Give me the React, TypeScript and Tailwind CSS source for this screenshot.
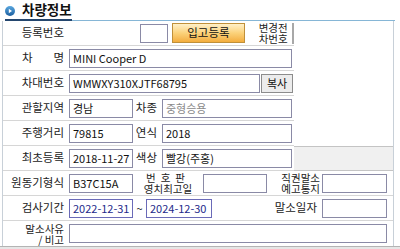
const font = "font-['Noto_Sans_CJK_KR','Noto_Sans',sans-serif]";

function Label({ w, children, className = "" }: { w: string; children: React.ReactNode; className?: string }) {
  return (
    <div className={`flex h-full shrink-0 items-center justify-end pr-[5px] text-[11.5px] text-[#222] ${w} ${className}`}>
      {children}
    </div>
  );
}

function Field({ w, value = "", tone = "normal" }: { w: string; value?: string; tone?: "normal" | "date" | "muted" }) {
  const color =
    tone === "date"
      ? "border-[#6a6ab8] text-[#1e2a8a]"
      : tone === "muted"
        ? "border-[#8a8aa6] text-[#8a8a8a]"
        : "border-[#8a8aa6] text-[#111]";
  return (
    <div className={`flex h-[19px] shrink-0 items-center overflow-hidden whitespace-nowrap border bg-white pl-[3px] text-[11px] ${color} ${w}`}>
      {value}
    </div>
  );
}

function Row({ children, right, last }: { children: React.ReactNode; right?: React.ReactNode; last?: boolean }) {
  return (
    <div className="flex h-[25px]">
      <div className={`flex w-[291px] shrink-0 items-center ${last ? "" : "border-b border-[#d6d6d6]"}`}>{children}</div>
      <div className="flex-1">{right}</div>
    </div>
  );
}

function WideRow({ children, line = true }: { children: React.ReactNode; line?: boolean }) {
  return (
    <div className={`flex h-[25px] items-center ${line ? "border-b border-[#d6d6d6]" : ""}`}>{children}</div>
  );
}

export default function App() {
  return (
    <div className={`h-[249px] w-[400px] overflow-hidden bg-white ${font}`}>
      <div className="flex h-[19px] items-center pl-[5px]">
        <svg width="10" height="10" viewBox="0 0 10 10" className="mt-[3px]">
          <defs>
            <linearGradient id="ic" x1="0" y1="0" x2="0" y2="1">
              <stop offset="0" stopColor="#5aa8e0" />
              <stop offset="1" stopColor="#1b5e9e" />
            </linearGradient>
          </defs>
          <circle cx="5" cy="5" r="5" fill="url(#ic)" />
          <path d="M3.8 2.8 L7 5 L3.8 7.2 Z" fill="#fff" />
        </svg>
        <span className="ml-[7px] text-[13.5px] font-bold leading-none text-[#111]">차량정보</span>
      </div>
      <div className="flex h-[2px] items-end pl-[5px] pr-[5px]">
        <div className="h-[2px] w-[67px] bg-[#24466e]" />
        <div className="h-[1px] flex-1 bg-[#86b6d6]" />
      </div>

      <div className="ml-[2px] mr-[6px] border-l border-r border-[#c8d0d8]">
        <Row>
          <Label w="w-[66px]">등록번호</Label>
          <div className="w-[71px]" />
          <Field w="w-[28px]" />
          <div className="ml-[4px] flex h-[20px] w-[74px] items-center justify-center border border-[#c0903a] bg-gradient-to-b from-[#fff0c8] via-[#fbd27a] to-[#f3ad3c] text-[11.5px] text-[#111]">
            입고등록
          </div>
          <div className="ml-[10px] flex w-[36px] flex-col items-center text-[10.5px] leading-[11px] text-[#222]">
            <span>변경전</span>
            <span>차번호</span>
          </div>
          <div className="ml-[1px] h-[21px] w-[2px] bg-[#a8a8a8]" />
        </Row>
        <Row>
          <div className="flex h-full w-[66px] shrink-0 items-center pl-[19px] text-[11.5px] text-[#222]">
            <span>차</span>
            <span className="ml-[21px]">명</span>
          </div>
          <Field w="w-[223px]" value="MINI Cooper D" />
        </Row>
        <Row>
          <Label w="w-[66px]">차대번호</Label>
          <Field w="w-[191px]" value="WMWXY310XJTF68795" />
          <div className="ml-[1px] flex h-[19px] w-[32px] items-center justify-center border border-[#8c8c8c] bg-[#ececec] text-[11px] text-[#111]">
            복사
          </div>
        </Row>
        <Row>
          <Label w="w-[66px]">관할지역</Label>
          <Field w="w-[64px]" value="경남" />
          <Label w="w-[29px]">차종</Label>
          <Field w="w-[130px]" value="중형승용" tone="muted" />
        </Row>
        <Row>
          <Label w="w-[66px]">주행거리</Label>
          <Field w="w-[64px]" value="79815" />
          <Label w="w-[29px]">연식</Label>
          <Field w="w-[130px]" value="2018" />
        </Row>
        <Row right={<div className="h-full border-t border-b border-[#c4c4c4] bg-[#f0f0f0]" />}>
          <Label w="w-[66px]">최초등록</Label>
          <Field w="w-[64px]" value="2018-11-27" />
          <Label w="w-[29px]">색상</Label>
          <Field w="w-[130px]" value="빨강(주홍)" />
        </Row>
        <WideRow>
          <Label w="w-[66px]">원동기형식</Label>
          <Field w="w-[64px]" value="B37C15A" />
          <div className="flex w-[70px] shrink-0 flex-col items-center text-[10.5px] leading-[11px] text-[#222]">
            <span className="tracking-[5px]">번호판</span>
            <span>영치최고일</span>
          </div>
          <Field w="w-[64px]" />
          <div className="flex w-[55px] shrink-0 flex-col items-end pr-[2px] text-[10.5px] leading-[11px] text-[#222]">
            <span>직권말소</span>
            <span>예고통지</span>
          </div>
          <Field w="w-[65px]" />
        </WideRow>
        <WideRow>
          <Label w="w-[66px]">검사기간</Label>
          <Field w="w-[64px]" value="2022-12-31" tone="date" />
          <div className="w-[13px] shrink-0 text-center text-[11px] text-[#222]">~</div>
          <Field w="w-[66px]" value="2024-12-30" tone="date" />
          <div className="w-[55px] shrink-0" />
          <Label w="w-[55px]" className="pr-[4px]">말소일자</Label>
          <Field w="w-[65px]" />
        </WideRow>
        <WideRow line={false}>
          <div className="flex w-[66px] shrink-0 flex-col items-end pr-[5px] text-[10.5px] leading-[11px] text-[#222]">
            <span>말소사유</span>
            <span>/ 비고</span>
          </div>
          <Field w="w-[318px]" />
        </WideRow>
      </div>
      <div className="h-[4px] border-t border-[#b4b4b4] bg-[#e6e6e6]" />
    </div>
  );
}
